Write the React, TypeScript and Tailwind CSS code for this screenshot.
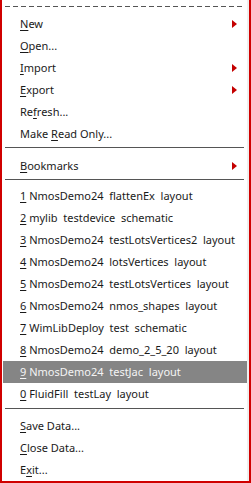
import React from "react";

type Item =
  | { kind: "item"; before: string; key: string; after: string; sub?: boolean; active?: boolean }
  | { kind: "sep"; cls: string };

const items: Item[] = [
  { kind: "item", before: "", key: "N", after: "ew", sub: true },
  { kind: "item", before: "", key: "O", after: "pen..." },
  { kind: "item", before: "", key: "I", after: "mport", sub: true },
  { kind: "item", before: "", key: "E", after: "xport", sub: true },
  { kind: "item", before: "Re", key: "f", after: "resh..." },
  { kind: "item", before: "Make ", key: "R", after: "ead Only..." },
  { kind: "sep", cls: "pt-[2px] pb-[7px]" },
  { kind: "item", before: "", key: "B", after: "ookmarks", sub: true },
  { kind: "sep", cls: "pt-[2px] pb-[5px]" },
  { kind: "item", before: "", key: "1", after: " NmosDemo24  flattenEx  layout" },
  { kind: "item", before: "", key: "2", after: " mylib  testdevice  schematic" },
  { kind: "item", before: "", key: "3", after: " NmosDemo24  testLotsVertices2  layout" },
  { kind: "item", before: "", key: "4", after: " NmosDemo24  lotsVertices  layout" },
  { kind: "item", before: "", key: "5", after: " NmosDemo24  testLotsVertices  layout" },
  { kind: "item", before: "", key: "6", after: " NmosDemo24  nmos_shapes  layout" },
  { kind: "item", before: "", key: "7", after: " WimLibDeploy  test  schematic" },
  { kind: "item", before: "", key: "8", after: " NmosDemo24  demo_2_5_20  layout" },
  { kind: "item", before: "", key: "9", after: " NmosDemo24  testJac  layout", active: true },
  { kind: "item", before: "", key: "0", after: " FluidFill  testLay  layout" },
  { kind: "sep", cls: "pt-[3px] pb-[6px]" },
  { kind: "item", before: "", key: "S", after: "ave Data..." },
  { kind: "item", before: "", key: "C", after: "lose Data..." },
  { kind: "item", before: "E", key: "x", after: "it..." },
];

function Arrow() {
  return (
    <svg width="5" height="8" viewBox="0 0 5 8" className="shrink-0">
      <polygon points="0,0 5,4 0,8" fill="#c40000" />
    </svg>
  );
}

export default function App() {
  return (
    <div
      className="h-[483px] w-[251px] overflow-hidden border-x-2 border-b-2 border-[#d00000] bg-white"
      style={{ fontFamily: '"Noto Sans", "Open Sans", sans-serif' }}
    >
      <div className="flex h-full flex-col overflow-hidden border-r-2 border-[#efefef]">
        <div className="h-[13px] shrink-0 pt-[6px] pr-[3px] pl-[3px]">
          <div className="h-px bg-[repeating-linear-gradient(90deg,#555_0_5px,transparent_5px_8px)]" />
        </div>
        {items.map((it, i) =>
          it.kind === "sep" ? (
            <div key={i} className={"shrink-0 px-[3px] " + it.cls}>
              <div className="h-px bg-[#555]" />
            </div>
          ) : (
            <div
              key={i}
              className={
                "ml-px flex h-[22px] shrink-0 items-center pr-[10px] pl-[17px] text-[11px] whitespace-pre " +
                (it.active ? "bg-[#858585] text-[#f4f4f4]" : "text-[#1a1a1a]")
              }
            >
              <span className="flex-1">
                {it.before}
                <span className="underline decoration-1 underline-offset-[2px]">{it.key}</span>
                {it.after}
              </span>
              {it.sub && <Arrow />}
            </div>
          )
        )}
      </div>
    </div>
  );
}
